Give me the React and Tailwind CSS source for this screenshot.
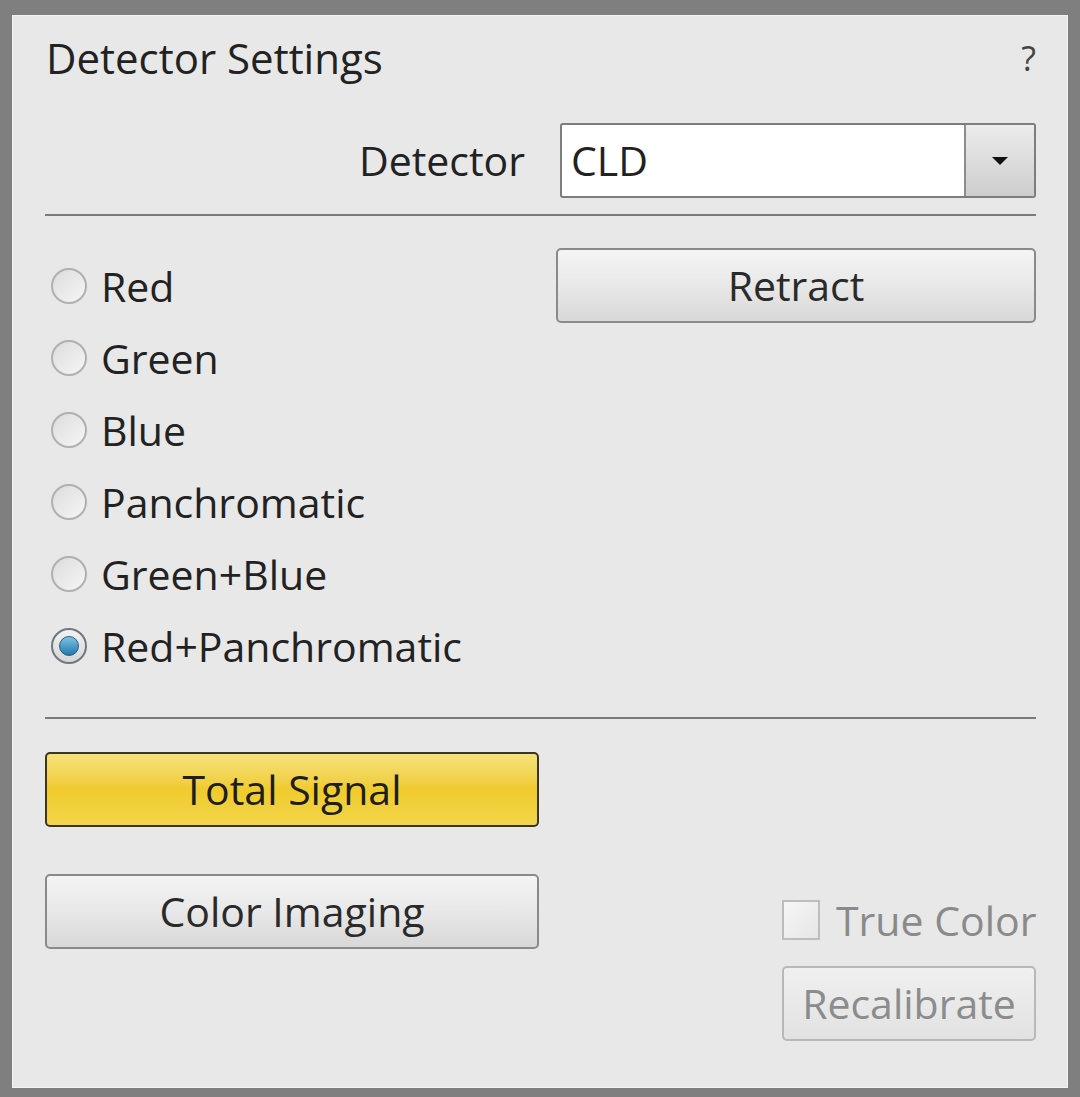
import React, { useState } from 'react';

const FONT = { fontFamily: '"Open Sans", "Noto Sans", sans-serif' };

const Radio = ({ label, checked, onSelect }) => (
    <div className="h-[72px] flex items-center cursor-pointer" onClick={onSelect}>
        <div
            className={`w-[36px] h-[36px] rounded-full border-2 flex items-center justify-center shrink-0 ${
                checked
                    ? 'border-[#6f7780] bg-gradient-to-b from-[#f2f2f2] to-[#d6d6d6]'
                    : 'border-[#b0b0b0] bg-gradient-to-br from-[#dcdcdc] to-[#f6f6f6]'
            }`}
        >
            {checked && (
                <div className="w-[20px] h-[20px] rounded-full bg-gradient-to-b from-[#7cc3e6] to-[#1f78ad] border border-[#2a5d7e]" />
            )}
        </div>
        <span className="ml-[14px] text-[41px] leading-none text-[#222]">{label}</span>
    </div>
);

const Button = ({ children, className = '', disabled = false }) => (
    <button
        className={`h-[75px] rounded-[5px] border-2 flex items-center justify-center text-[41px] leading-none ${
            disabled
                ? 'border-[#b8b8b8] bg-gradient-to-b from-[#f0f0f0] to-[#e2e2e2] text-[#8c8c8c]'
                : 'border-[#8a8a8a] bg-gradient-to-b from-[#f4f4f4] via-[#e8e8e8] to-[#d8d8d8] text-[#2a2a2a]'
        } ${className}`}
    >
        {children}
    </button>
);

export default function App() {
    const [selected, setSelected] = useState('Red+Panchromatic');
    const options = ['Red', 'Green', 'Blue', 'Panchromatic', 'Green+Blue', 'Red+Panchromatic'];

    return (
        <div className="w-[1080px] h-[1097px] bg-[#7f7f7f] pt-[15px] pl-[12px] pr-[12px] pb-[9px]" style={FONT}>
            <div className="w-full h-full bg-[#e8e8e8] border border-[#f4f4f4] pl-[32px] pr-[31px] flex flex-col">
                {/* header */}
                <div className="flex items-center justify-between h-[48px] mt-[18px]">
                    <span className="text-[42px] leading-none font-medium text-[#222] ml-[1px]">Detector Settings</span>
                    <span className="text-[34px] leading-none text-[#444]">?</span>
                </div>

                {/* detector select */}
                <div className="flex items-center justify-end mt-[41px] h-[75px]">
                    <span className="text-[41px] leading-none text-[#222] mr-[35px]">Detector</span>
                    <div className="w-[476px] h-[75px] border-2 border-[#7d7d7d] rounded-[3px] bg-white flex">
                        <div className="flex-1 flex items-center pl-[9px] text-[41px] leading-none text-[#222]">CLD</div>
                        <div className="w-[70px] border-l-2 border-[#8c8c8c] bg-gradient-to-b from-[#ececec] to-[#cdcdcd] flex items-center justify-center">
                            <svg width="18" height="10" viewBox="0 0 18 10">
                                <path d="M1 1 H17 L9 9 Z" fill="#111" />
                            </svg>
                        </div>
                    </div>
                </div>

                <div className="h-[2px] bg-[#7a7a7a] mt-[16px]" />

                {/* mode radios + retract */}
                <div className="flex justify-between">
                    <div className="flex flex-col pt-[34px] pl-[6px]">
                        {options.map(o => (
                            <Radio key={o} label={o} checked={selected === o} onSelect={() => setSelected(o)} />
                        ))}
                    </div>
                    <Button className="w-[480px] mt-[32px]">Retract</Button>
                </div>

                <div className="h-[2px] bg-[#7a7a7a] mt-[35px]" />

                {/* signal buttons */}
                <button className="mt-[33px] w-[494px] h-[75px] rounded-[5px] border-2 border-[#3c361e] bg-gradient-to-b from-[#f6e27a] via-[#f0cb2c] to-[#f3d54a] flex items-center justify-center text-[41px] leading-none text-[#1e1e1e]">
                    Total Signal
                </button>

                <div className="flex justify-between items-start mt-[47px]">
                    <Button className="w-[494px]">Color Imaging</Button>
                    <div className="flex flex-col items-start mt-[25px] w-[254px]">
                        <div className="flex items-center h-[42px]">
                            <div className="w-[38px] h-[40px] border-2 border-[#bdbdbd] bg-gradient-to-br from-[#f6f6f6] to-[#e6e6e6]" />
                            <span className="ml-[16px] text-[41px] leading-none text-[#8a8a8a] whitespace-nowrap">True Color</span>
                        </div>
                        <Button disabled className="w-[254px] mt-[25px]">Recalibrate</Button>
                    </div>
                </div>
            </div>
        </div>
    );
}
